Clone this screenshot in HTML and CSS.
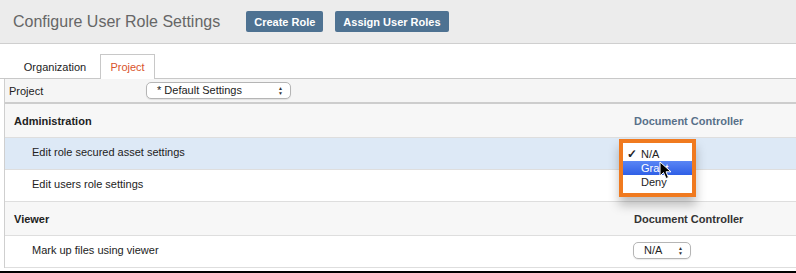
FILE: index.html
```html
<!DOCTYPE html>
<html lang="en">
<head>
    <meta charset="UTF-8">
    <title>Configure User Role Settings</title>
    <link rel="stylesheet" href="styles.css">
</head>
<body>

    <div class="header">
        <h1>Configure User Role Settings</h1>
        <button class="button">Create Role</button>
        <button class="button">Assign User Roles</button>
    </div>

    <div class="tabs">
        <div class="tab">Organization</div>
        <div class="tab active">Project</div>
    </div>

    <div class="settings">
        <div class="project-row">
            <span class="project-label">Project</span>
            <div class="select wide">* Default Settings <span class="arrows">&#9650;<br>&#9660;</span></div>
        </div>

        <!-- Administration -->
        <div class="row section">
            <span class="label">Administration</span>
            <span class="role link">Document Controller</span>
        </div>
        <div class="row item selected">
            <span class="label">Edit role secured asset settings</span>
            <span class="role"></span>
            <div class="popup">
                <div class="menu">
                    <div class="option"><span class="check">&#10003;</span>N/A</div>
                    <div class="option hover">Grant</div>
                    <div class="option">Deny</div>
                </div>
                <svg class="cursor" width="13" height="19" viewBox="0 0 13 19">
                    <path d="M1 1 L1 15 L4.5 11.5 L7 17.5 L9.5 16.5 L7 10.8 L12 10.8 Z" fill="#000" stroke="#fff" stroke-width="1"/>
                </svg>
            </div>
        </div>
        <div class="row item">
            <span class="label">Edit users role settings</span>
            <span class="role"></span>
        </div>

        <!-- Viewer -->
        <div class="row section">
            <span class="label">Viewer</span>
            <span class="role">Document Controller</span>
        </div>
        <div class="row item">
            <span class="label">Mark up files using viewer</span>
            <span class="role"><span class="select small">N/A <span class="arrows">&#9650;<br>&#9660;</span></span></span>
        </div>
    </div>

    <div class="footer"></div>

</body>
</html>
```

FILE: styles.css
```css
body {
    font-family: "Liberation Sans", Arial, sans-serif;
    margin: 0;
    padding: 0;
    background-color: #fff;
    color: #222;
    font-size: 11px;
    width: 796px;
    height: 273px;
    overflow: hidden;
}
.header {
    display: flex;
    align-items: center;
    height: 43px;
    padding-left: 13px;
    background-color: #ececec;
    border-bottom: 1px solid #cfcfcf;
}
h1 {
    margin: 0 26px 0 0;
    font-size: 16px;
    font-weight: normal;
    color: #666;
    transform: scaleY(1.08);
}
.button {
    height: 21px;
    margin-right: 12px;
    padding: 0 8px;
    background-color: #4e7292;
    color: white;
    font-family: "Liberation Sans", Arial, sans-serif;
    font-size: 11px;
    font-weight: bold;
    border: none;
    border-radius: 2px;
}
.tabs {
    display: flex;
    margin-top: 10px;
    padding-left: 10px;
    border-bottom: 1px solid #c8c8c8;
    height: 24px;
}
.tab {
    width: 90px;
    line-height: 26px;
    text-align: center;
    font-size: 11px;
    color: #222;
}
.tab.active {
    width: 53px;
    margin-bottom: -1px;
    background: #fff;
    border: 1px solid #c8c8c8;
    border-bottom: none;
    color: #d9532b;
    line-height: 25px;
}
.settings {
    margin-left: 4px;
    border-left: 1px solid #cfcfcf;
}
.project-row {
    display: flex;
    align-items: center;
    height: 23px;
    padding-left: 4px;
    background-color: #f5f5f5;
    border-bottom: 2px solid #cdcdcd;
}
.project-label {
    width: 137px;
}
.select {
    position: relative;
    display: inline-block;
    height: 15px;
    line-height: 15px;
    padding-left: 10px;
    background: #fff;
    border: 1px solid #b5b5b5;
    border-radius: 5px;
    box-shadow: 0 1px 1px rgba(0, 0, 0, 0.08);
    font-size: 11px;
}
.select.wide {
    width: 133px;
}
.select.small {
    width: 46px;
}
.arrows {
    position: absolute;
    right: 7px;
    top: 3px;
    font-size: 5px;
    line-height: 5px;
    color: #333;
}
.row {
    position: relative;
    display: flex;
    align-items: center;
    border-bottom: 1px solid #dedede;
}
.section {
    height: 33px;
    padding-left: 9px;
    background-color: #f7f7f7;
    font-weight: bold;
}
.section .label {
    width: 620px;
}
.section .role {
    color: #333;
}
.section .role.link {
    color: #587089;
}
.item {
    height: 28px;
    padding-bottom: 3px;
    padding-left: 27px;
}
.item .label {
    width: 601px;
}
.item.selected {
    background-color: #dde9f6;
}
.popup {
    position: absolute;
    left: 614px;
    top: 1px;
    width: 69px;
    height: 50px;
    border: 4px solid #f07a1f;
    box-shadow: 0 8px 10px rgba(0, 0, 0, 0.25);
    z-index: 2;
}
.menu {
    height: 100%;
    padding-top: 4px;
    box-sizing: border-box;
    background: #fff;
}
.option {
    position: relative;
    height: 14px;
    line-height: 14px;
    padding-left: 18px;
    font-size: 11px;
}
.option.hover {
    background: linear-gradient(#5a86f5, #2f5fe6);
    color: #fff;
}
.check {
    position: absolute;
    left: 4px;
    font-size: 12px;
    font-weight: bold;
}
.cursor {
    position: absolute;
    left: 36px;
    top: 18px;
}
.footer {
    margin-top: 3px;
    height: 2px;
    background: #000;
}
```
